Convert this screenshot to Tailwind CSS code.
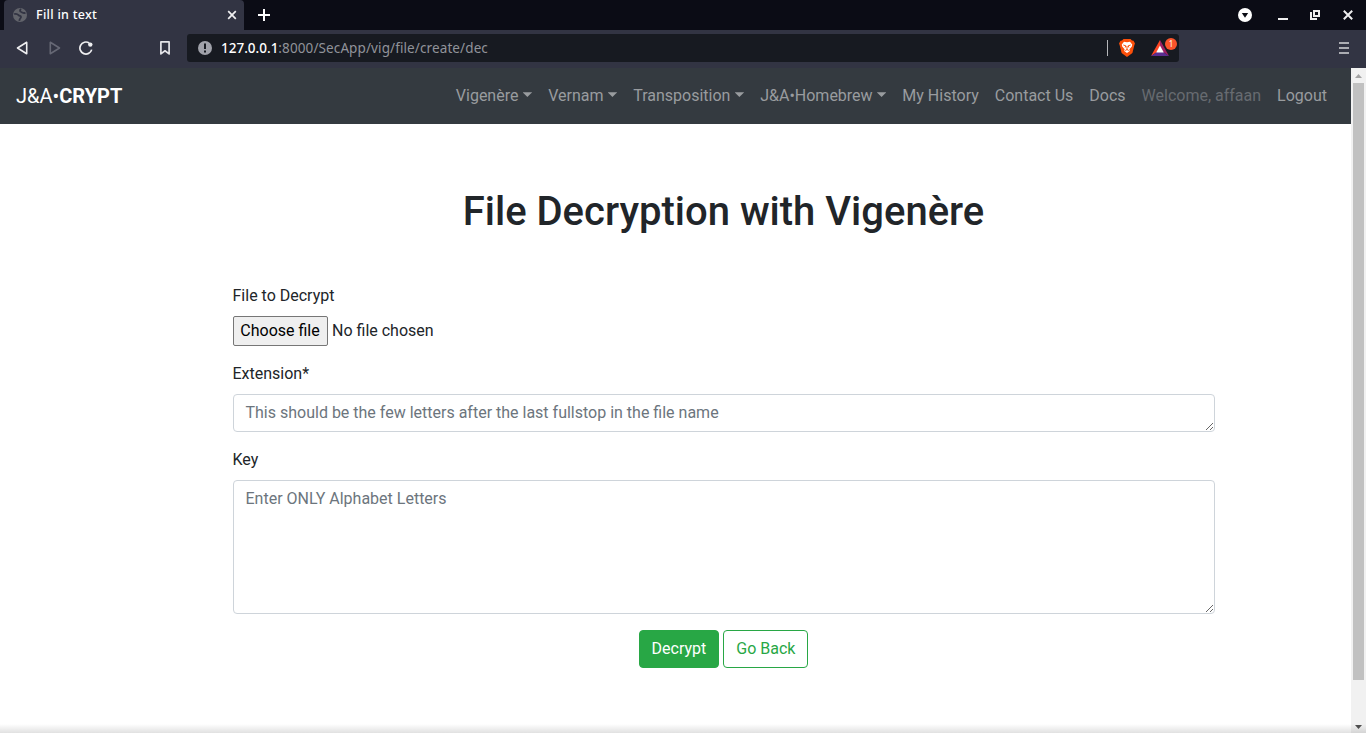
<!DOCTYPE html>
<html lang="en">
<head>
<meta charset="utf-8">
<title>Fill in text</title>
<script src="https://cdn.jsdelivr.net/npm/@tailwindcss/browser@4"></script>
</head>
<body class="w-[1366px] h-[733px] overflow-hidden flex flex-col bg-white font-['Roboto',sans-serif] text-base text-[#212529]">

<!-- Tab strip -->
<div class="h-[30px] shrink-0 bg-[#0b0c15] flex items-stretch pl-1 font-['Noto_Sans',sans-serif]">
  <div class="w-[240px] bg-[#323443] rounded-t-[4px] flex items-center pl-[9px] pr-[7px]">
    <svg class="w-[14px] h-[14px] shrink-0" viewBox="0 0 14 14"><circle cx="7" cy="7" r="7" fill="#62646b"/><path d="M1.200 6.200C3 5.600 4.500 6 5.500 7.200s2.300.4 2.500 1.600S6.500 10.500 6.300 12.800M8 1C6.500 2.500 6.800 3.500 8.200 4s1.800 1.500 4.300.8" fill="none" stroke="#323443" stroke-width="1.800"/></svg>
    <span class="ml-[9px] text-[12.5px] font-medium tracking-[0.28px] text-white">Fill in text</span>
    <svg class="w-[10px] h-[10px] ml-auto" viewBox="0 0 10 10"><path d="M1.200 1.200l7.600 7.600M8.800 1.200L1.200 8.800" stroke="#f0f0f2" stroke-width="1.700"/></svg>
  </div>
  <svg class="w-[12px] h-[12px] ml-[14px] mt-[9px]" viewBox="0 0 12 12"><path d="M6 0v12M0 6h12" stroke="#fff" stroke-width="2"/></svg>
  <div class="ml-auto flex items-center pr-[13px]">
    <svg class="w-[14px] h-[14px]" viewBox="0 0 14 14"><circle cx="7" cy="7" r="7" fill="#fff"/><path d="M3.800 5h6.400L7 9.800z" fill="#0b0c15"/></svg>
    <svg class="w-[10px] h-[10px] ml-[26px]" viewBox="0 0 10 10"><path d="M0 9h10" stroke="#eee" stroke-width="2"/></svg>
    <svg class="w-[10px] h-[10px] ml-[22px]" viewBox="0 0 10 10"><path d="M4 1h5v5H4zM1 2v7h6" fill="none" stroke="#eee" stroke-width="2"/></svg>
    <svg class="w-[10px] h-[10px] ml-[23px]" viewBox="0 0 10 10"><path d="M.8.8l8.400 8.400M9.200.8L.8 9.200" stroke="#eee" stroke-width="2"/></svg>
  </div>
</div>

<!-- Toolbar -->
<div class="h-[38px] shrink-0 bg-[#323443] flex items-start pt-1 font-['Noto_Sans',sans-serif]">
  <div class="w-[187px] h-[28px] flex items-center pl-[16px]">
    <svg class="w-[12px] h-[14px]" viewBox="0 0 12 14"><path d="M10.700 1.300v11.400L1.500 7z" fill="none" stroke="#eeeef0" stroke-width="1.600" stroke-linejoin="round"/></svg>
    <svg class="w-[12px] h-[14px] ml-[21px]" viewBox="0 0 12 14"><path d="M1.300 1.300v11.400L10.500 7z" fill="none" stroke="#666875" stroke-width="1.600" stroke-linejoin="round"/></svg>
    <svg class="w-[14px] h-[14px] ml-[18px]" viewBox="0 0 14 14"><path d="M10.200 2A6 6 0 1 0 12.700 8.600" fill="none" stroke="#eeeef0" stroke-width="1.700"/><circle cx="11.300" cy="3.600" r="2.200" fill="#eeeef0"/></svg>
    <svg class="w-[10px] h-[14px] ml-[67px]" viewBox="0 0 10 14"><path d="M.9.9h8.200v12L5 9.800.9 12.900z" fill="none" stroke="#e4e4e8" stroke-width="1.700" stroke-linejoin="round"/></svg>
  </div>
  <div class="w-[992px] h-[28px] rounded-[3px] bg-[#171a21] flex items-center pl-[11px] pr-[3px]">
    <svg class="w-[14px] h-[14px]" viewBox="0 0 14 14"><circle cx="7" cy="7" r="7" fill="#a0a2aa"/><path d="M7 2.500v5.500M7 9.500v2" stroke="#171a21" stroke-width="2"/></svg>
    <span class="ml-[9px] text-[13.5px] whitespace-pre tracking-[0.11px] text-[#91939a]"><span class="text-white font-medium tracking-[0px]">127.0.0.1</span>:8000/SecApp/vig/file/create/dec</span>
    <span class="ml-auto w-px h-[16px] bg-[#b5b6ba]"></span>
    <svg class="w-[16px] h-[18px] ml-[11px]" viewBox="0 0 16 18"><path d="M4.500 0h7l1.500 1.500 1.500.2 1.500 2.800-.6 1.500-2 8L8 18l-5.400-4-2-8L0 4.500l1.500-2.800L3 1.500z" fill="#fb4f0a"/><path d="M8 3.300l3-.5L13.200 5.500l-.4 1.900-2.400 2.900.4 1.700L8 14l-2.800-2 .4-1.700L3.200 7.400l-.4-1.900L5 2.800z" fill="#fff"/><path d="M4.300 6l2.500.8-.6 1.700M11.700 6l-2.500.8.6 1.700M8 7v3.500M6.300 11.500L8 10.500l1.700 1" fill="none" stroke="#fb4f0a" stroke-width="1"/></svg>
    <div class="relative w-[26px] h-[20px] ml-[15px]">
      <svg class="w-[18px] h-[16px] mt-[2px] ml-[1px]" viewBox="0 0 18 16"><path d="M9 0L0 16l9-6z" fill="#ff4724"/><path d="M9 0L18 16 9 10z" fill="#9e1f63"/><path d="M0 16h18l-9-6z" fill="#5b2d91"/><path d="M9 5.500L12.800 12.500H5.200z" fill="#fff"/></svg>
      <span class="absolute left-[15px] top-0 w-[12px] h-[12px] rounded-full bg-[#fb542b] text-white text-[8px] leading-[12px] text-center">1</span>
    </div>
  </div>
  <svg class="w-[10px] h-[12px] ml-auto mr-[17px] mt-[8px]" viewBox="0 0 10 12"><path d="M0 1h10M0 6h10M0 11h10" stroke="#d3d4d8" stroke-width="1.700"/></svg>
</div>

<!-- Viewport -->
<div class="flex-1 flex min-h-0 relative">
  <div class="flex-1 flex flex-col">
    <nav class="h-[56px] bg-[#343a40] flex items-center px-4 text-[#999c9f]">
      <span class="text-[20px] leading-[30px] text-white font-normal">J&amp;A•<b class="font-bold">CRYPT</b></span>
      <div class="ml-auto flex leading-6 [&>span]:px-2 [&_i]:inline-block [&_i]:ml-[4.15px] [&_i]:align-[4px] [&_i]:w-[9.6px] [&_i]:h-[4.8px] [&_i]:bg-[#999c9f] [&_i]:[clip-path:polygon(0_0,100%_0,50%_100%)]">
        <span>Vigenère<i></i></span>
        <span>Vernam<i></i></span>
        <span>Transposition<i></i></span>
        <span>J&amp;A•Homebrew<i></i></span>
        <span>My History</span>
        <span>Contact Us</span>
        <span>Docs</span>
        <span class="text-[#676b70]">Welcome, affaan</span>
        <span>Logout</span>
      </div>
    </nav>
    <main class="w-[982px] ml-[232.5px] pt-[64px]">
      <h1 class="text-[40px] leading-[48px] font-medium text-center">File Decryption with Vigenère</h1>
      <div class="mt-[48px] leading-6">File to Decrypt</div>
      <div class="mt-2 flex items-center h-[30px]">
        <button class="w-[95px] h-[30px] border border-[#767676] rounded-[2px] bg-[#efefef] text-black leading-6">Choose file</button>
        <span class="ml-[4.5px]">No file chosen</span>
      </div>
      <label class="block mt-[16px] leading-6">Extension*</label>
      <textarea class="block mt-[8px] w-full h-[38px] px-3 py-[6px] leading-6 border border-[#ced4da] rounded-[4px] bg-white placeholder:text-[#6c757d] resize overflow-hidden" placeholder="This should be the few letters after the last fullstop in the file name"></textarea>
      <label class="block mt-[16px] leading-6">Key</label>
      <textarea class="block mt-[8px] w-full h-[134px] px-3 py-[6px] leading-6 border border-[#ced4da] rounded-[4px] bg-white placeholder:text-[#6c757d] resize overflow-hidden" placeholder="Enter ONLY Alphabet Letters"></textarea>
      <div class="mt-4 flex justify-center gap-1">
        <button class="h-[38px] px-3 border border-[#28a745] bg-[#28a745] text-white rounded-[4px]">Decrypt</button>
        <button class="h-[38px] px-3 border border-[#28a745] text-[#28a745] rounded-[4px]">Go Back</button>
      </div>
    </main>
  </div>
  <!-- Scrollbar -->
  <div class="w-[15px] bg-[#f1f1f1] flex flex-col items-center">
    <svg class="w-[15px] h-[15px]" viewBox="0 0 15 15"><path d="M4 10h7L7.500 6z" fill="#a3a3a3"/></svg>
    <div class="w-[11px] h-[597px] bg-[#c1c1c1]"></div>
    <svg class="w-[15px] h-[15px] mt-auto" viewBox="0 0 15 15"><path d="M4 7h7l-3.500 4z" fill="#505050"/></svg>
  </div>
  <div class="absolute inset-x-0 bottom-0 h-[9px] bg-linear-to-t from-black/12 to-transparent pointer-events-none"></div>
</div>
</body>
</html>
